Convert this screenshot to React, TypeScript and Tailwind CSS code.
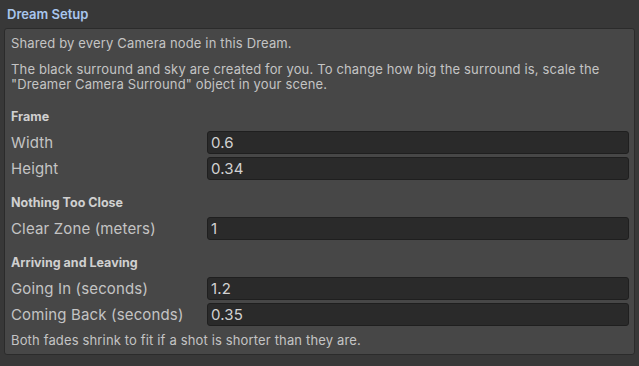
import React from 'react'

type Field = { label: string; value: string }

const sections: { title: string; fields: Field[] }[] = [
  {
    title: 'Frame',
    fields: [
      { label: 'Width', value: '0.6' },
      { label: 'Height', value: '0.34' },
    ],
  },
  {
    title: 'Nothing Too Close',
    fields: [{ label: 'Clear Zone (meters)', value: '1' }],
  },
  {
    title: 'Arriving and Leaving',
    fields: [
      { label: 'Going In (seconds)', value: '1.2' },
      { label: 'Coming Back (seconds)', value: '0.35' },
    ],
  },
]

function Row({ label, value }: Field) {
  return (
    <div className="flex items-center h-[23px] mb-[3px] last:mb-0">
      <span className="w-[196px] shrink-0 text-[15px] text-[#c4c4c4]">{label}</span>
      <div className="flex-1 h-[23px] flex items-center px-[3px] rounded-[3px] bg-[#2a2a2a] border border-[#1f1f1f] text-[15px] text-[#d2d2d2]">
        {value}
      </div>
    </div>
  )
}

export default function App() {
  return (
    <div
      className="w-[639px] h-[366px] bg-[#383838] px-[4px] pt-[5px]"
      style={{ fontFamily: 'Inter, "Noto Sans", sans-serif' }}
    >
      {/* Header */}
      <div className="h-[23px] pl-[3px] text-[13px] font-semibold text-[#a8c6ee] leading-[18px]">
        Dream Setup
      </div>

      {/* Panel */}
      <div className="w-[631px] h-[327px] bg-[#474747] border border-[#2b2b2b] rounded-[3px] pl-[6px] pr-[5px] pt-[7px] text-[13px] tracking-[0.15px] text-[#c4c4c4] leading-[15px]">
        <p>Shared by every Camera node in this Dream.</p>
        <p className="mt-[11px]">
          The black surround and sky are created for you. To change how big the surround is, scale the
          <br />
          "Dreamer Camera Surround" object in your scene.
        </p>

        {sections.map((s, i) => (
          <div key={s.title} className={i === 0 ? 'mt-[16px]' : 'mt-[14px]'}>
            <div className="text-[12.5px] tracking-normal font-bold text-[#d0d0d0] h-[18px] leading-[18px] mb-[5px]">
              {s.title}
            </div>
            {s.fields.map((f) => (
              <Row key={f.label} {...f} />
            ))}
          </div>
        ))}

        <p className="mt-[7px]">Both fades shrink to fit if a shot is shorter than they are.</p>
      </div>
    </div>
  )
}
